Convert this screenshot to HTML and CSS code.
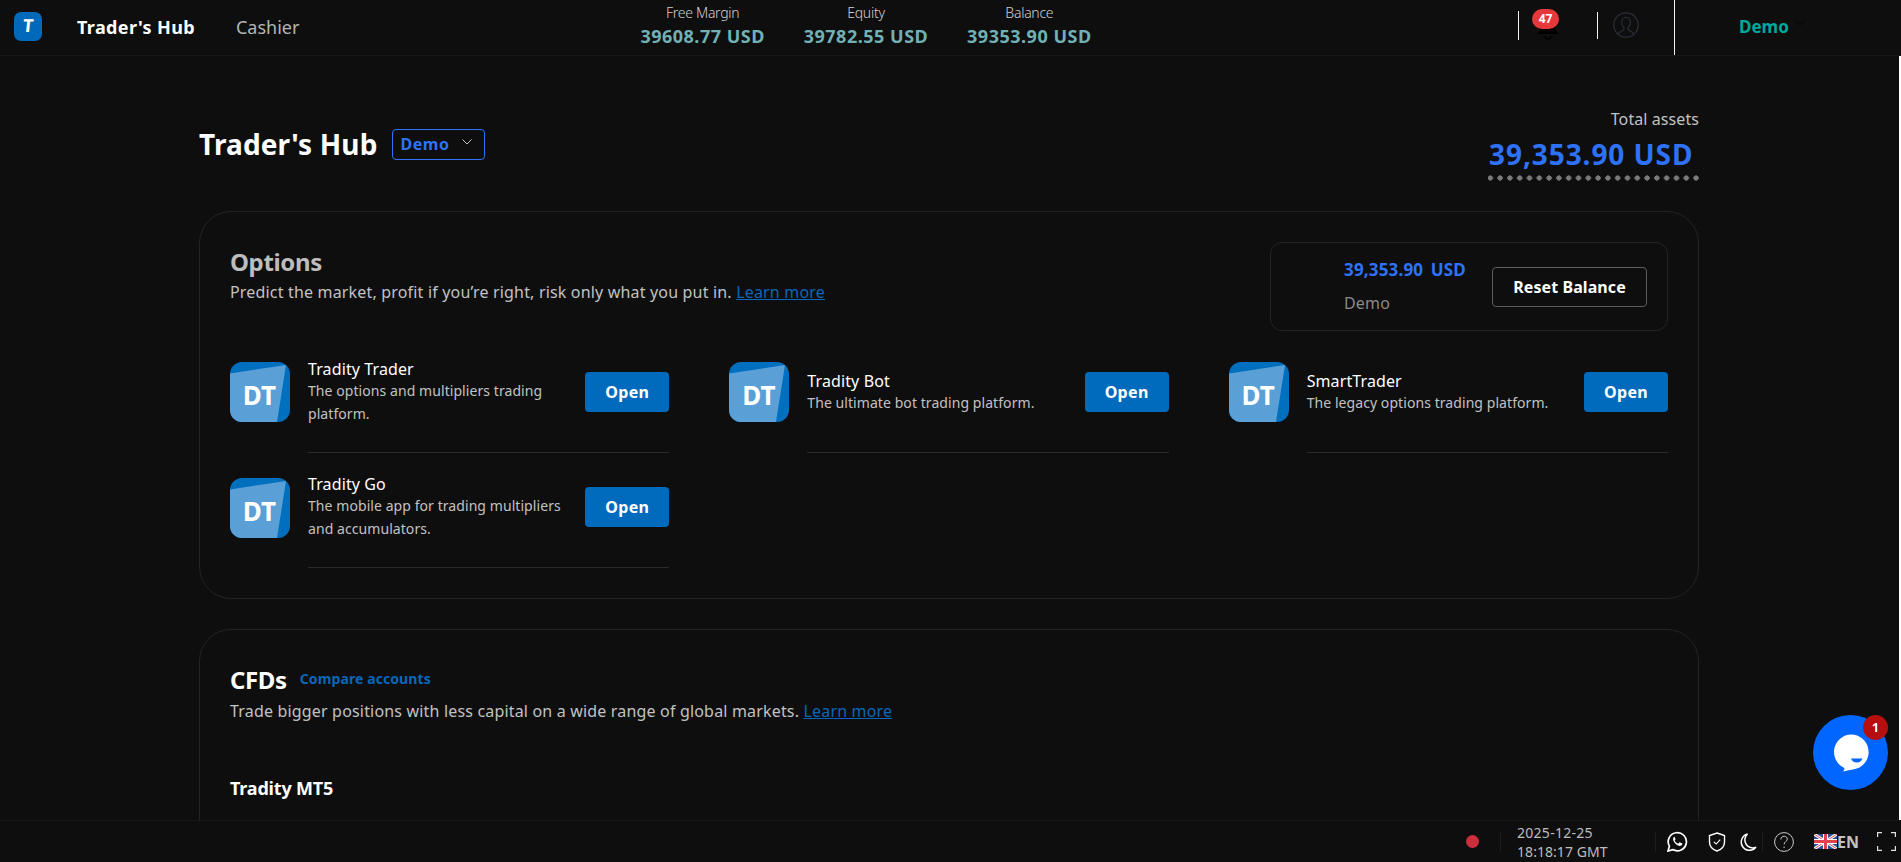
FILE: index.html
```html
<!DOCTYPE html>
<html lang="en">
<head>
<meta charset="utf-8">
<title>Trader's Hub</title>
<link rel="stylesheet" href="styles.css">
</head>
<body>
<div class="app">
  <header class="topbar">
    <div class="nav">
      <div class="logo"><span>T</span></div>
      <a class="nav-link active">Trader's Hub</a>
      <a class="nav-link">Cashier</a>
    </div>
    <div class="stats">
      <div class="stat"><span class="stat-label">Free Margin</span><span class="stat-value">39608.77 USD</span></div>
      <div class="stat"><span class="stat-label">Equity</span><span class="stat-value">39782.55 USD</span></div>
      <div class="stat"><span class="stat-label">Balance</span><span class="stat-value">39353.90 USD</span></div>
    </div>
    <div class="top-right">
      <div class="vline vline-a"></div>
      <div class="bell">
        <svg class="bell-icon" width="22" height="24" viewBox="0 0 22 24"><path d="M11 1c-4 0-6 3-6 7 0 4-2 7-4 9v1h20v-1c-2-2-4-5-4-9 0-4-2-7-6-7z" fill="#000"/><path d="M8 20a3 3 0 0 0 6 0" fill="none" stroke="#000" stroke-width="1.5"/></svg>
        <span class="badge">47</span>
      </div>
      <div class="vline vline-b"></div>
      <svg class="avatar" width="26" height="26" viewBox="0 0 26 26" fill="none" stroke="#2b3038" stroke-width="1.2"><circle cx="13" cy="13" r="12.2"/><path d="M5.500 22.500c.5-3 3-3.500 5-4.500.8-.5.7-1.800 0-2.600-1.200-1.300-1.800-2.800-1.800-5C8.700 7.300 10.500 5.500 13 5.500s4.300 1.800 4.300 4.900c0 2.200-.6 3.700-1.800 5-.7.8-.8 2.100 0 2.600 2 1 4.500 1.500 5 4.500"/></svg>
      <div class="vline vline-c"></div>
      <div class="account">Demo
        <svg width="10" height="6" viewBox="0 0 10 6" fill="none" stroke="#000" stroke-width="1"><path d="M.5.5 5 5 9.500.5"/></svg>
      </div>
    </div>
  </header>

  <main class="main">
    <section class="hub-head">
      <div class="hub-title">
        <h1>Trader's Hub</h1>
        <div class="pill">Demo
          <svg width="10" height="6" viewBox="0 0 10 6" fill="none" stroke="#c2c2c2" stroke-width="1"><path d="M.5.5 5 5 9.500.5"/></svg>
        </div>
      </div>
      <div class="assets">
        <div class="assets-label">Total assets</div>
        <div class="assets-value">39,353.90 USD</div>
      </div>
    </section>

    <section class="card">
      <div class="options-head">
        <div class="options-intro">
          <h2 class="card-title muted">Options</h2>
          <p class="card-desc">Predict the market, profit if you’re right, risk only what you put in. <a class="learn">Learn more</a></p>
        </div>
        <div class="balance-box">
          <div class="balance-text">
            <div class="balance-amount">39,353.90 USD</div>
            <div class="balance-name">Demo</div>
          </div>
          <button class="reset">Reset Balance</button>
        </div>
      </div>
      <div class="apps">
        <div class="app-item">
          <div class="app-icon"><svg class="app-shape" viewBox="0 0 60 60"><polygon points="0,11.500 56,3 47,60 0,60"/></svg><span>DT</span></div>
          <div class="app-body">
            <div class="app-text"><div class="app-name">Tradity Trader</div><div class="app-desc">The options and multipliers trading platform.</div></div>
            <button class="open">Open</button>
          </div>
        </div>
        <div class="app-item">
          <div class="app-icon"><svg class="app-shape" viewBox="0 0 60 60"><polygon points="0,11.500 56,3 47,60 0,60"/></svg><span>DT</span></div>
          <div class="app-body">
            <div class="app-text"><div class="app-name">Tradity Bot</div><div class="app-desc">The ultimate bot trading platform.</div></div>
            <button class="open">Open</button>
          </div>
        </div>
        <div class="app-item">
          <div class="app-icon"><svg class="app-shape" viewBox="0 0 60 60"><polygon points="0,11.500 56,3 47,60 0,60"/></svg><span>DT</span></div>
          <div class="app-body">
            <div class="app-text"><div class="app-name">SmartTrader</div><div class="app-desc">The legacy options trading platform.</div></div>
            <button class="open">Open</button>
          </div>
        </div>
        <div class="app-item">
          <div class="app-icon"><svg class="app-shape" viewBox="0 0 60 60"><polygon points="0,11.500 56,3 47,60 0,60"/></svg><span>DT</span></div>
          <div class="app-body">
            <div class="app-text"><div class="app-name">Tradity Go</div><div class="app-desc">The mobile app for trading multipliers and accumulators.</div></div>
            <button class="open">Open</button>
          </div>
        </div>
      </div>
    </section>

    <section class="card card-cfd">
      <div class="cfd-title">
        <h2 class="card-title">CFDs</h2>
        <a class="compare">Compare accounts</a>
      </div>
      <p class="card-desc cfd-desc">Trade bigger positions with less capital on a wide range of global markets. <a class="learn">Learn more</a></p>
      <h3 class="mt5">Tradity MT5</h3>
    </section>
  </main>

  <footer class="footer">
    <span class="status-dot"></span>
    <span class="fsep fsep-a"></span>
    <div class="clock"><div class="clock-date">2025-12-25</div><div>18:18:17 GMT</div></div>
    <span class="fsep fsep-b"></span>
    <svg class="f-whatsapp" width="21" height="21" viewBox="0 0 21 21" fill="none" stroke="#fff"><path stroke-width="1.700" d="M1 20l1.400-4.800A9.100 9.100 0 1 1 5.800 18.600z"/><path fill="#fff" stroke="none" d="M7.600 5.700c-.4 0-1.500.6-1.500 2.300 0 3 3.700 6.900 6.800 6.900 1.700 0 2.400-1.200 2.400-1.800 0-.5-.1-.6-.4-.8l-1.900-.9c-.3-.1-.5-.1-.7.2l-.7.900c-.2.200-.4.200-.7.100-1.400-.6-2.400-1.500-3.100-2.800-.1-.3-.1-.4.100-.6l.5-.7c.2-.2.200-.4.100-.6l-.8-1.800c-.2-.4-.3-.4-.6-.4z"/></svg>
    <svg class="f-shield" width="18" height="20" viewBox="0 0 18 20" fill="none" stroke="#fff" stroke-width="1.400"><path d="M9 1l7.500 2.500v6.500c0 4.500-3 7.500-7.500 9-4.500-1.500-7.500-4.500-7.500-9V3.500z"/><path d="M5.800 9.800 8.200 12l4-4.300" stroke-width="1.100"/></svg>
    <svg class="f-moon" width="17" height="18" viewBox="0 0 17 18" fill="none" stroke="#fff" stroke-width="1.500"><path d="M7.500 1A8.300 8.300 0 1 0 16 14.300 8 8 0 0 1 7.500 1z"/></svg>
    <span class="fsep fsep-c"></span>
    <svg class="f-help" width="20" height="20" viewBox="0 0 20 20" fill="none" stroke="#c9c9c9" stroke-width="1"><circle cx="10" cy="10" r="9.400"/><path d="M6.800 7.500c0-2 1.500-3.200 3.300-3.200 1.900 0 3.200 1.200 3.200 2.800 0 2.400-3.200 2.600-3.200 5.300"/><circle cx="10.100" cy="15.200" r=".7" fill="#c9c9c9" stroke="none"/></svg>
    <svg class="f-flag" width="23" height="15" viewBox="0 0 23 15"><rect width="23" height="15" fill="#2a4f9a"/><path d="M0 0l23 15M23 0 0 15" stroke="#fff" stroke-width="3"/><path d="M0 0l23 15M23 0 0 15" stroke="#e0424f" stroke-width="1"/><path d="M11.500 0v15M0 7.500h23" stroke="#fff" stroke-width="5"/><path d="M11.500 0v15M0 7.500h23" stroke="#e0424f" stroke-width="3"/></svg>
    <span class="lang">EN</span>
    <svg class="f-full" width="19" height="19" viewBox="0 0 19 19" fill="none" stroke="#e0e0e0" stroke-width="1.200"><path d="M.6 5V.6H5M14 .6h4.400V5M18.400 14v4.400H14M5 18.400H.6V14"/></svg>
  </footer>
</div>

<div class="chat">
  <svg width="42" height="42" viewBox="0 0 42 42"><path fill="#fff" d="M21 3.500a17.500 17.500 0 0 1 5 34.300c-4 1.200-8 1.500-13 2.700 1-1.200 1.600-2.200 1.400-3.500A17.500 17.500 0 0 1 21 3.500z"/><path fill="#0066ff" d="M21 27.500h11.500c-1 2.800-3 4-5.800 4s-4.700-1.200-5.700-4z"/></svg>
  <span class="chat-badge">1</span>
</div>
</body>
</html>
```

FILE: styles.css
```css
* { box-sizing: border-box; }
html, body { margin: 0; height: 100%; overflow: hidden; }
body {
  background: #fff;
  font-family: "Noto Sans", "Open Sans", sans-serif;
  color: #c2c2c2;
}
h1, h2, h3, p { margin: 0; }

.app { display: flex; flex-direction: column; height: 862px; }

/* top bar */
.topbar {
  display: flex;
  height: 56px;
  flex: none;
  background: #0e0e0e;
  border-bottom: 1px solid #171717;
}
.nav { display: flex; align-items: center; width: 621px; padding-left: 14px; padding-bottom: 2px; }
.logo {
  width: 28px; height: 29px; border-radius: 7px;
  background: #0069ba; color: #fff;
  font-weight: 700; font-size: 18px;
  display: flex; align-items: center; justify-content: center;
}
.logo span { display: block; transform: skewX(-6deg); margin-top: -3px; }
.nav-link { font-size: 18px; line-height: 24px; color: #b5b5b5; margin-left: 41px; }
.nav-link.active { color: #fff; font-weight: 700; margin-left: 35px; letter-spacing: 0.02em; }
.stats { display: flex; width: 490px; }
.stat { width: 163.500px; display: flex; flex-direction: column; align-items: center; padding-top: 3px; }
.stat-label { font-size: 14px; font-weight: 300; line-height: 20px; color: #d0d0d0; letter-spacing: -0.02em; }
.stat-value { font-size: 18px; line-height: 24px; margin-top: 1px; font-weight: 700; color: #71b1b5; letter-spacing: 0.028em; }
.top-right { display: flex; margin-left: auto; width: 383px; align-items: flex-start; }
.vline { width: 1px; background: #f2f2f2; flex: none; }
.vline-a { height: 29px; margin-top: 11px; }
.vline-b { height: 27px; margin-top: 12px; }
.vline-c { height: 55px; margin-left: 35px; }
.bell { position: relative; width: 78px; height: 55px; flex: none; }
.bell-icon { position: absolute; left: 18px; top: 16px; }
.badge {
  position: absolute; left: 13px; top: 9px;
  width: 27px; height: 20px; border-radius: 10px;
  background: #e5383b; color: #fff;
  font-size: 12px; font-weight: 700; line-height: 19px; text-align: center;
}
.avatar { margin: 12px 0 0 15px; flex: none; }
.account {
  display: flex; align-items: center; gap: 6px;
  margin-left: 64px; height: 53px;
  font-size: 17px; font-weight: 700; color: #00a79e;
}
.account svg { margin-top: -7px; }

/* main */
.main {
  flex: 1; min-height: 0; overflow: hidden;
  margin-right: 2px;
  background: #0e0e0e;
  padding: 52px 200px 0 199px;
}
.hub-head { display: flex; justify-content: space-between; align-items: flex-start; height: 103px; }
.hub-title { display: flex; align-items: center; gap: 15px; padding-top: 20px; }
.hub-title h1 { font-size: 28px; line-height: 32px; font-weight: 700; color: #fff; letter-spacing: 0.005em; }
.pill {
  display: flex; align-items: center; gap: 12px;
  height: 31px; width: 93px; padding-left: 7px;
  border: 1px solid #2f72fa; border-radius: 4px;
  color: #2f72fa; font-size: 16px; font-weight: 700; letter-spacing: 0.035em;
}
.pill svg { margin-top: -5px; }
.assets { display: flex; flex-direction: column; align-items: flex-end; }
.assets-label { font-size: 16px; line-height: 22px; color: #c2c2c2; letter-spacing: 0.005em; }
.assets-value {
  width: 211px;
  font-size: 28px; line-height: 38px; font-weight: 700; color: #2f72fa;
  padding: 5px 6px 8px 1px; text-align: left; white-space: nowrap; letter-spacing: 0.033em;
  background: radial-gradient(circle, #7a7a7a 2.400px, transparent 2.900px) -2.600px bottom / 9.800px 6px repeat-x;
}

.card {
  width: 1500px;
  border: 1px solid #242424;
  border-radius: 32px;
  padding: 30px;
}
.options-head { display: flex; justify-content: space-between; align-items: flex-start; }
.options-intro { padding-top: 2px; }
.card-title { font-size: 24px; line-height: 36px; font-weight: 700; color: #fff; letter-spacing: -0.015em; }
.card-title.muted { color: #bdbdbd; }
.card-desc { font-size: 16px; line-height: 24px; color: #c2c2c2; letter-spacing: 0.011em; }
.learn { color: #0a66b8; text-decoration: underline; }
.balance-box {
  display: flex; align-items: center; justify-content: space-between;
  width: 398px; height: 89px;
  border: 1px solid #242424; border-radius: 12px;
  padding: 0 20px 0 73px;
}
.balance-amount { font-size: 17px; line-height: 22px; font-weight: 700; color: #2f72fa; margin-bottom: 11px; letter-spacing: 0.01em; word-spacing: 3px; }
.balance-name { font-size: 16px; line-height: 22px; color: #8a8a8a; letter-spacing: 0.01em; }
.reset {
  width: 155px; height: 40px;
  background: transparent; border: 1px solid #5c5c5c; border-radius: 4px;
  font: inherit; font-size: 16px; font-weight: 700; color: #fff; letter-spacing: 0.005em;
}
.apps {
  display: grid;
  grid-template-columns: repeat(3, 1fr);
  column-gap: 60px; row-gap: 21.100px;
  margin-top: 27.800px;
}
.app-item { display: flex; gap: 18px; }
.app-icon {
  position: relative; flex: none;
  width: 60px; height: 60px; margin-top: 3.700px;
  border-radius: 12px; overflow: hidden;
  background: #006fbe; color: #fff;
  font-size: 26px; font-weight: 700;
  display: flex; align-items: center; justify-content: center;
}
.app-icon span { position: relative; padding-top: 6px; padding-right: 1px; }
.app-shape { position: absolute; inset: 0; width: 60px; height: 60px; fill: #5b9fd7; }
.app-body {
  flex: 1; display: flex; align-items: center; gap: 16px;
  height: 94px; padding-bottom: 27px;
  border-bottom: 1px solid #2a2a2a;
}
.app-text { flex: 1; }
.app-name { font-size: 16px; line-height: 22px; color: #fff; letter-spacing: 0.007em; }
.app-desc { font-size: 14px; line-height: 22.500px; color: #c2c2c2; letter-spacing: 0.005em; }
.open {
  flex: none; width: 84px; height: 40px;
  background: #006bbd; border: 0; border-radius: 4px;
  font: inherit; font-size: 16px; font-weight: 700; color: #fff; letter-spacing: 0.02em;
}

.card-cfd { margin-top: 30px; height: 400px; }
.cfd-title { display: flex; align-items: center; gap: 13px; }
.cfd-title .card-title { line-height: 40px; }
.compare { font-size: 14px; font-weight: 700; color: #0a66b8; margin-top: -3px; letter-spacing: 0.007em; }
.cfd-desc { margin-top: -1px; }
.mt5 { font-size: 18px; line-height: 24px; font-weight: 700; color: #fff; margin-top: 53px; letter-spacing: -0.01em; }

/* footer */
.footer {
  flex: none; height: 42px;
  display: flex; align-items: center;
  background: #0e0e0e;
  border-top: 1px solid #171717;
  padding-left: 1466px;
}
.status-dot { width: 13px; height: 13px; border-radius: 50%; background: #cc2e3d; flex: none; }
.fsep { width: 1px; height: 20px; background: #1d1d1d; flex: none; }
.fsep-a { margin-left: 21px; }
.clock { margin-left: 16px; width: 138px; font-size: 14px; line-height: 19px; color: #bdbdbd; white-space: nowrap; letter-spacing: 0.004em; }
.clock-date { letter-spacing: 0.02em; }
.fsep-c { margin-left: 5px; }
.f-whatsapp { margin-left: 11px; flex: none; }
.f-shield { margin-left: 20px; flex: none; }
.f-moon { margin-left: 14px; flex: none; }
.f-help { margin-left: 11px; flex: none; }
.f-flag { margin-left: 20px; flex: none; }
.lang { font-size: 16px; font-weight: 700; color: #c2c2c2; width: 40px; flex: none; }
.f-full { flex: none; }

/* chat launcher */
.chat {
  position: fixed; left: 1813px; top: 715px;
  width: 75px; height: 75px; border-radius: 50%;
  background: #0066ff;
  display: flex; align-items: center; justify-content: center;
}
.chat svg { margin-bottom: 1px; }
.chat-badge {
  position: absolute; left: 50px; top: 0;
  width: 25px; height: 25px; border-radius: 50%;
  background: #b5100f; color: #fff;
  font-size: 13px; font-weight: 700; line-height: 25px; text-align: center;
}
```
